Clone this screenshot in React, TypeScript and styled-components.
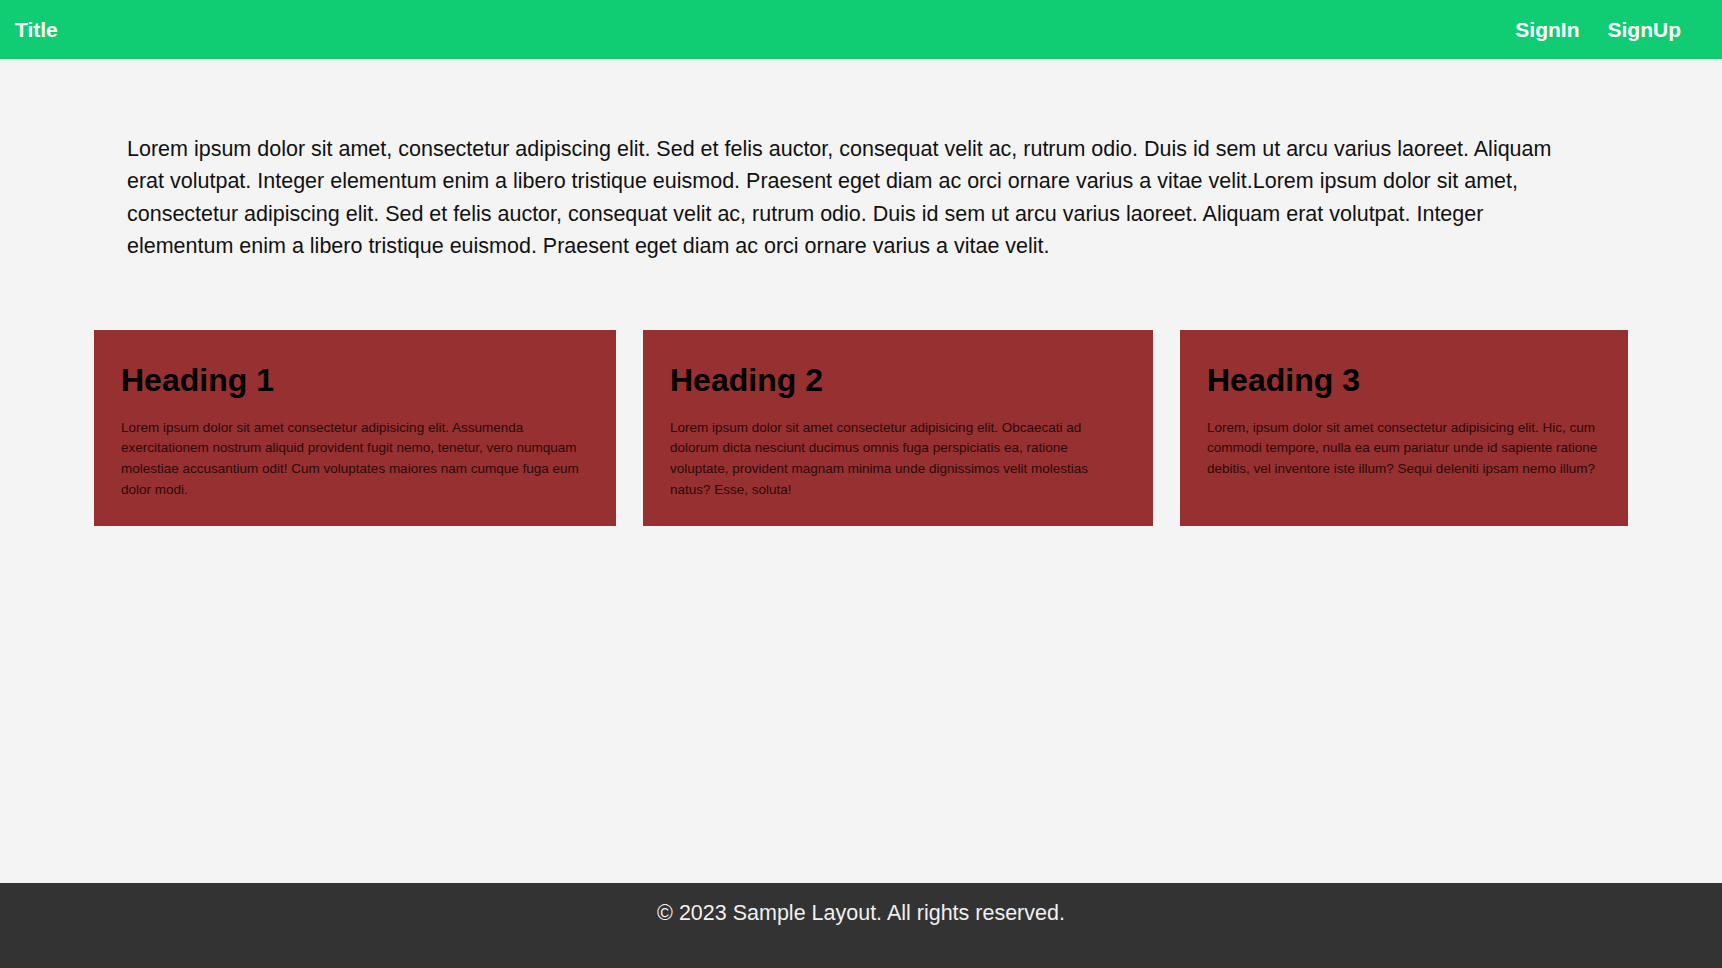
import React from "react";
import styled, { createGlobalStyle } from "styled-components";

const GlobalStyle = createGlobalStyle`
  html, body { margin: 0; padding: 0; }
  body {
    background: #f4f4f4;
    font-family: "Liberation Sans", Arial, sans-serif;
    color: #111;
  }
  * { box-sizing: border-box; }
`;

const Page = styled.div`
  min-height: 100vh;
  display: flex;
  flex-direction: column;
`;

const Header = styled.header`
  height: 59px;
  background: #10cc72;
  display: flex;
  align-items: center;
  justify-content: space-between;
  padding: 0 41px 0 15px;
  color: #fff;
`;

const Brand = styled.div`
  font-size: 21px;
  font-weight: bold;
`;

const Nav = styled.nav`
  display: flex;
  gap: 28px;
`;

const NavLink = styled.a`
  font-size: 21px;
  font-weight: bold;
  color: #fff;
  text-decoration: none;
  cursor: pointer;
`;

const Main = styled.main`
  flex: 1;
  display: flex;
  flex-direction: column;
  padding: 74px 0 0;
`;

const Intro = styled.p`
  margin: 0;
  padding: 0 152px 0 127px;
  font-size: 21.5px;
  line-height: 32.4px;
  color: #111;
`;

const CardRow = styled.section`
  margin-top: 67px;
  padding: 0 94px;
  display: grid;
  grid-template-columns: 522fr 510fr 448fr;
  gap: 27px;
`;

const Card = styled.article`
  background: #973030;
  padding: 26px 27px;
  min-height: 196px;
`;

const CardTitle = styled.h2`
  margin: 6px 0 19px;
  font-size: 32px;
  font-weight: bold;
  color: #000;
  line-height: 37px;
`;

const CardText = styled.p`
  margin: 0;
  font-size: 13.5px;
  line-height: 20.7px;
  color: #2a0a0a;
`;

const Footer = styled.footer`
  height: 85px;
  background: #333;
  color: #f0f0f0;
  text-align: center;
  padding-top: 18px;
  font-size: 21.5px;
  line-height: 24px;
`;

const cards = [
  {
    title: "Heading 1",
    text: "Lorem ipsum dolor sit amet consectetur adipisicing elit. Assumenda exercitationem nostrum aliquid provident fugit nemo, tenetur, vero numquam molestiae accusantium odit! Cum voluptates maiores nam cumque fuga eum dolor modi.",
  },
  {
    title: "Heading 2",
    text: "Lorem ipsum dolor sit amet consectetur adipisicing elit. Obcaecati ad dolorum dicta nesciunt ducimus omnis fuga perspiciatis ea, ratione voluptate, provident magnam minima unde dignissimos velit molestias natus? Esse, soluta!",
  },
  {
    title: "Heading 3",
    text: "Lorem, ipsum dolor sit amet consectetur adipisicing elit. Hic, cum commodi tempore, nulla ea eum pariatur unde id sapiente ratione debitis, vel inventore iste illum? Sequi deleniti ipsam nemo illum?",
  },
];

export default function App() {
  return (
    <>
      <GlobalStyle />
      <Page>
        <Header>
          <Brand>Title</Brand>
          <Nav>
            <NavLink>SignIn</NavLink>
            <NavLink>SignUp</NavLink>
          </Nav>
        </Header>
        <Main>
          <Intro>
            Lorem ipsum dolor sit amet, consectetur adipiscing elit. Sed et felis auctor, consequat velit ac, rutrum odio. Duis id sem ut arcu varius laoreet. Aliquam erat volutpat. Integer elementum enim a libero tristique euismod. Praesent eget diam ac orci ornare varius a vitae velit.Lorem ipsum dolor sit amet, consectetur adipiscing elit. Sed et felis auctor, consequat velit ac, rutrum odio. Duis id sem ut arcu varius laoreet. Aliquam erat volutpat. Integer elementum enim a libero tristique euismod. Praesent eget diam ac orci ornare varius a vitae velit.
          </Intro>
          <CardRow>
            {cards.map((c) => (
              <Card key={c.title}>
                <CardTitle>{c.title}</CardTitle>
                <CardText>{c.text}</CardText>
              </Card>
            ))}
          </CardRow>
        </Main>
        <Footer>© 2023 Sample Layout. All rights reserved.</Footer>
      </Page>
    </>
  );
}
